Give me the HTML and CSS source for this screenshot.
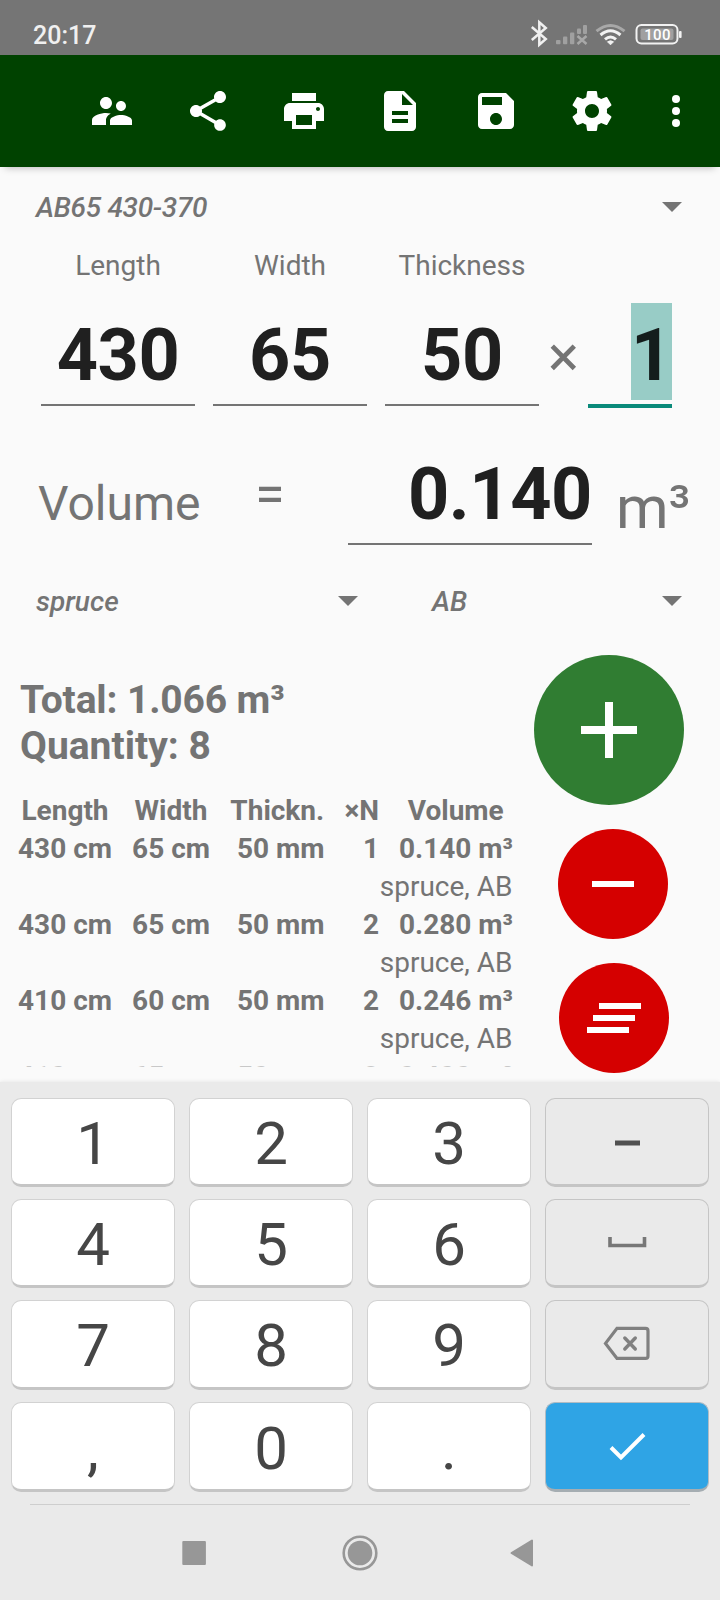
FILE: index.html
```html
<!DOCTYPE html>
<html lang="en">
<head>
<meta charset="utf-8">
<title>Timber calculator</title>
<link rel="stylesheet" href="styles.css">
</head>
<body>
<div class="phone">
  <header class="status">
    <span class="clock">20:17</span>
    <svg class="status-icons" width="156" height="30" viewBox="0 0 156 30">
      <path d="M2.800 8L16.800 20L10.300 25.800V3.200L16.800 9L2.800 21" fill="none" stroke="#f0f0f0" stroke-width="2.500"/>
      <g fill="#a0a0a0">
        <rect x="27" y="21" width="4.500" height="4.300" rx="1"/><rect x="34" y="17.500" width="4.300" height="7.800" rx="1"/><rect x="41" y="13.500" width="4.300" height="11.800" rx="1"/><rect x="48" y="9.500" width="4" height="5.500" rx="1"/><rect x="54" y="6" width="4" height="9" rx="1"/>
      </g>
      <path d="M48.500 17l9 8M57.500 17l-9 8" stroke="#a8a8a8" stroke-width="2.500"/>
      <g fill="none" stroke="#f2f2f2" stroke-width="3">
        <path d="M67.500 12.200Q81.500 .8 95.500 12.200" stroke="#a8a8a8"/>
        <path d="M71.500 16Q81.500 7.500 91.500 16"/><path d="M76 20.400Q81.500 15.500 87 20.400"/>
      </g>
      <path d="M78.500 22.800q3-2 6 0l-3 3z" fill="#f2f2f2" stroke="#f2f2f2"/>
      <rect x="107.500" y="6" width="41" height="18.500" rx="5" fill="none" stroke="#f2f2f2" stroke-width="2"/>
      <rect x="111.500" y="9.500" width="33" height="11.500" rx="2" fill="#a0a0a0"/>
      <rect x="150" y="12" width="2.600" height="7" rx="1" fill="#f2f2f2"/>
      <text class="battery" x="128.500" y="20.500" text-anchor="middle">100</text>
    </svg>
  </header>

  <nav class="toolbar">
    <span class="tool"><svg viewBox="0 0 24 24"><path d="M16.500 12c1.380 0 2.490-1.120 2.490-2.500S17.880 7 16.500 7 14 8.120 14 9.500s1.120 2.500 2.500 2.500zM9 11c1.660 0 2.990-1.340 2.990-3S10.660 5 9 5 6 6.340 6 8s1.340 3 3 3zm7.500 3c-1.830 0-5.500.92-5.500 2.750V19h11v-2.250c0-1.830-3.670-2.750-5.500-2.750zM9 13c-2.330 0-7 1.170-7 3.500V19h7v-2.250c0-.85.33-2.340 2.370-3.470C10.500 13.100 9.660 13 9 13z"/></svg></span>
    <span class="tool"><svg viewBox="0 0 24 24"><path d="M18 16.080c-.76 0-1.440.3-1.960.77L8.910 12.700c.05-.23.09-.46.09-.7s-.04-.47-.09-.7l7.050-4.110c.54.5 1.250.81 2.040.81 1.660 0 3-1.340 3-3s-1.340-3-3-3-3 1.340-3 3c0 .24.040.47.090.7L8.040 9.810C7.500 9.310 6.790 9 6 9c-1.660 0-3 1.340-3 3s1.340 3 3 3c.79 0 1.500-.31 2.040-.81l7.120 4.160c-.05.21-.08.43-.08.65 0 1.610 1.310 2.920 2.920 2.920s2.920-1.310 2.920-2.920-1.310-2.920-2.920-2.920z"/></svg></span>
    <span class="tool"><svg viewBox="0 0 24 24"><path d="M19 8H5c-1.660 0-3 1.340-3 3v6h4v4h12v-4h4v-6c0-1.660-1.340-3-3-3zm-3 11H8v-5h8v5zm3-7c-.55 0-1-.45-1-1s.45-1 1-1 1 .45 1 1-.45 1-1 1zm-1-9H6v4h12V3z"/></svg></span>
    <span class="tool"><svg viewBox="0 0 24 24"><path d="M14 2H6c-1.100 0-1.990.9-1.990 2L4 20c0 1.100.89 2 1.990 2H18c1.100 0 2-.9 2-2V8l-6-6zm2 16H8v-2h8v2zm0-4H8v-2h8v2zm-3-5V3.500L18.500 9H13z"/></svg></span>
    <span class="tool"><svg viewBox="0 0 24 24"><path d="M17 3H5c-1.110 0-2 .9-2 2v14c0 1.100.89 2 2 2h14c1.100 0 2-.9 2-2V7l-4-4zm-5 16c-1.660 0-3-1.340-3-3s1.340-3 3-3 3 1.340 3 3-1.340 3-3 3zm3-10H5V5h10v4z"/></svg></span>
    <span class="tool"><svg viewBox="0 0 24 24"><path d="M19.430 12.980c.04-.32.07-.64.07-.98s-.03-.66-.07-.98l2.110-1.650c.19-.15.24-.42.12-.64l-2-3.460c-.12-.22-.39-.3-.61-.22l-2.490 1c-.52-.4-1.080-.73-1.690-.98l-.38-2.650C14.460 2.180 14.250 2 14 2h-4c-.25 0-.46.18-.49.42l-.38 2.650c-.61.25-1.170.59-1.690.98l-2.490-1c-.23-.09-.49 0-.61.22l-2 3.460c-.13.22-.07.49.12.64l2.110 1.650c-.04.32-.07.65-.07.98s.03.66.07.98l-2.110 1.650c-.19.15-.24.42-.12.64l2 3.460c.12.22.39.3.61.22l2.490-1c.52.4 1.080.73 1.690.98l.38 2.650c.03.24.24.42.49.42h4c.25 0 .46-.18.49-.42l.38-2.650c.61-.25 1.170-.59 1.690-.98l2.490 1c.23.09.49 0 .61-.22l2-3.460c.12-.22.07-.49-.12-.64l-2.110-1.650zM12 15.500c-1.930 0-3.500-1.570-3.500-3.500s1.570-3.500 3.500-3.500 3.500 1.570 3.500 3.500-1.570 3.500-3.500 3.500z"/></svg></span>
    <span class="tool tool-more"><svg viewBox="0 0 24 24"><circle cx="12" cy="6" r="2"/><circle cx="12" cy="12" r="2"/><circle cx="12" cy="18" r="2"/></svg></span>
  </nav>

  <main class="content">
    <div class="spinners spinners-preset">
      <div class="spinner"><span>AB65 430-370</span><i class="caret"></i></div>
    </div>

    <div class="labels"><span>Length</span><span>Width</span><span>Thickness</span></div>
    <div class="dims">
      <div class="field">430</div>
      <div class="field">65</div>
      <div class="field">50</div>
      <div class="times">×</div>
      <div class="field field-active"><span class="selected">1</span></div>
    </div>

    <div class="volume">
      <span class="volume-label">Volume</span>
      <span class="equals">=</span>
      <div class="field field-result">0.140</div>
      <span class="unit">m³</span>
    </div>

    <div class="spinners spinners-type">
      <div class="spinner"><span>spruce</span><i class="caret"></i></div>
      <div class="spinner"><span>AB</span><i class="caret"></i></div>
    </div>

    <div class="lower">
      <section class="results">
        <div class="totals"><div class="total">Total: 1.066 m³</div><div>Quantity: 8</div></div>
        <div class="table">
          <div class="row head"><span>Length</span><span>Width</span><span>Thickn.</span><span>×N</span><span>Volume</span></div>
          <div class="row"><span>430 cm</span><span>65 cm</span><span>50 mm</span><span>1</span><span>0.140 m³</span></div>
          <div class="note">spruce, AB</div>
          <div class="row"><span>430 cm</span><span>65 cm</span><span>50 mm</span><span>2</span><span>0.280 m³</span></div>
          <div class="note">spruce, AB</div>
          <div class="row"><span>410 cm</span><span>60 cm</span><span>50 mm</span><span>2</span><span>0.246 m³</span></div>
          <div class="note">spruce, AB</div>
          <div class="row"><span>410 cm</span><span>65 cm</span><span>50 mm</span><span>3</span><span>0.400 m³</span></div>
        </div>
      </section>
      <div class="actions">
        <svg class="fab fab-add" viewBox="0 0 150 150"><path d="M71 47h8v24h24v8H79v24h-8V79H47v-8h24z"/></svg>
        <svg class="fab fab-remove" viewBox="0 0 110 110"><path d="M34 52h42v6H34z"/></svg>
        <svg class="fab fab-clear" viewBox="0 0 110 110"><path d="M40 40h42v6H40zM34 52h42v6H34zM28 64h42v6H28z"/></svg>
      </div>
    </div>
  </main>

  <section class="keyboard">
    <div class="keys">
      <div class="key">1</div><div class="key">2</div><div class="key">3</div>
      <div class="key key-fn"><svg width="48" height="48" viewBox="0 0 48 48"><path d="M12 23.500h25v5H12z" fill="#505050"/></svg></div>
      <div class="key">4</div><div class="key">5</div><div class="key">6</div>
      <div class="key key-fn"><svg width="48" height="48" viewBox="0 0 48 48"><path d="M7 19v8.500h34.500V19" fill="none" stroke="#777" stroke-width="3.600"/></svg></div>
      <div class="key">7</div><div class="key">8</div><div class="key">9</div>
      <div class="key key-fn"><svg width="48" height="48" viewBox="0 0 48 48"><path d="M14 9h28.500q2.500 0 2.500 2.500v25q0 2.500-2.500 2.500H14L2.500 24z" transform="translate(0 .4)" fill="none" stroke="#808080" stroke-width="3.200"/><path d="M21.800 19l10.500 11M32.300 19l-10.500 11" stroke="#808080" stroke-width="3.400" stroke-linecap="round"/></svg></div>
      <div class="key key-last">,</div><div class="key key-last">0</div><div class="key key-last">.</div>
      <div class="key key-enter"><svg width="48" height="48" viewBox="0 0 48 48"><path d="M8 26.500l10 10L41 13.500" fill="none" stroke="#fff" stroke-width="4"/></svg></div>
    </div>
    <div class="navbar">
      <svg width="24" height="24" viewBox="0 0 24 24"><rect x=".3" width="23.600" height="24" rx="1"/></svg>
      <svg class="nav-home" width="36" height="36" viewBox="0 0 36 36"><circle cx="18" cy="18" r="16.300" fill="none" stroke="#979797" stroke-width="2.600"/><circle cx="18" cy="18" r="12.300"/></svg>
      <svg width="24" height="28" viewBox="0 0 24 28"><path d="M22 1.500v25L1.500 14z" stroke="#979797" stroke-width="2" stroke-linejoin="round"/></svg>
    </div>
  </section>
</div>
</body>
</html>
```

FILE: styles.css
```css
* { box-sizing: border-box; }
body {
  margin: 0;
  background: #fafafa;
  font-family: Roboto, "Liberation Sans", sans-serif;
  color: #747474;
}
svg { display: block; flex: none; }
.phone { width: 720px; height: 1600px; display: flex; flex-direction: column; overflow: hidden; }

.status {
  flex: none;
  height: 55px;
  padding: 15px 30px 0 33px;
  display: flex;
  justify-content: space-between;
  background: #757575;
}
.clock { font-size: 25px; font-weight: 500; line-height: 41px; color: #f0f0f0; }
.status-icons { margin: 4px 5px 0 0; }
.battery { font-size: 15px; font-weight: 500; letter-spacing: .3px; fill: #fff; }

.toolbar {
  flex: none;
  height: 112px;
  padding: 0 8px 0 64px;
  display: flex;
  align-items: center;
  background: #004200;
  box-shadow: 0 6px 7px -5px rgba(0, 0, 0, .25);
}
.tool { width: 96px; display: flex; justify-content: center; }
.tool-more { width: 72px; }
.tool svg { width: 48px; height: 48px; fill: #fff; }

.content { flex: none; height: 915px; display: flex; flex-direction: column; }
.content > * { flex: none; }
.spinners { display: flex; height: 60px; padding-right: 38px; }
.spinners-preset { margin-top: 10px; padding-left: 36px; letter-spacing: -.3px; }
.spinners-type { margin-top: 26px; padding-left: 36px; gap: 74px; }
.spinner {
  flex: 1;
  display: flex;
  align-items: center;
  justify-content: space-between;
  font-size: 28px;
  font-style: italic;
  font-weight: 500;
}
.spinners-type .spinner:first-child { flex: none; width: 322px; }
.caret { border: 10px solid transparent; border-top-color: #747474; border-bottom: 0; }

.labels {
  margin: 12px 0 0 41px;
  display: grid;
  grid-template-columns: repeat(3, 154px);
  gap: 18px;
  font-size: 28px;
  line-height: 33px;
  text-align: center;
}
.dims {
  margin: 21px 48px 0 41px;
  height: 105px;
  display: flex;
  align-items: flex-start;
  gap: 18px;
}
.field {
  width: 154px;
  height: 103px;
  border-bottom: 2px solid #747474;
  display: flex;
  justify-content: center;
  font-size: 72px;
  font-weight: 700;
  letter-spacing: -.4px;
  line-height: 105px;
  color: #202020;
}
.times { width: 49px; margin: 0 -18px; font-size: 58px; line-height: 107px; text-align: center; }
.field-active { width: 84px; height: 105px; border-bottom: 4px solid #0a8a7a; justify-content: flex-end; }
.selected { width: 41px; height: 97px; background: #98ccc6; color: #141d1c; }

.volume {
  margin: 34px 28px 0 38px;
  height: 103px;
  display: flex;
}
.volume-label { width: 217px; padding-top: 34px; font-size: 48px; line-height: 56px; }
.equals { width: 93px; padding-top: 25px; font-size: 54px; line-height: 56px; }
.field-result { width: 244px; justify-content: flex-end; }
.unit { padding: 31px 0 0 24px; font-size: 60px; line-height: 70px; white-space: nowrap; }

.lower { height: 450px; padding: 0 36px 0 18px; display: flex; justify-content: space-between; }
.results { height: 436px; overflow: hidden; padding-top: 46px; }
.totals { margin: 0 0 23px 2px; font-size: 39px; font-weight: 700; line-height: 46px; }
.total { letter-spacing: -.15px; }
.row { display: grid; grid-template-columns: 94px 78px 94.500px 34.500px 113.500px; gap: 20px; }
.row, .note { width: 494.500px; height: 38px; font-size: 28px; line-height: 38px; text-align: right; white-space: nowrap; }
.row { font-weight: 700; }
.head { text-align: center; }
.row:last-child { color: #c8c8c8; }
.actions { width: 150px; padding-top: 24px; display: flex; flex-direction: column; align-items: center; gap: 24px; }
.fab { border-radius: 50%; fill: #fff; }
.fab-add { width: 150px; height: 150px; background: #307d32; }
.fab-remove { width: 110px; height: 110px; margin-left: 8px; background: #d50000; }
.fab-clear { width: 110px; height: 110px; margin-left: 10px; background: #d50000; }

.keyboard {
  flex: 1;
  min-height: 0;
  padding: 16px 11px 0;
  background: #eaeaea;
  box-shadow: 0 0 4px rgba(0, 0, 0, .1);
}
.keys {
  display: grid;
  grid-template-columns: repeat(4, 164px);
  grid-template-rows: 89px 89px 90px 90px;
  gap: 12px 14px;
}
.key {
  border: 1px solid #d2d2d2;
  border-bottom: 3px solid #c5c5c5;
  border-radius: 10px;
  background: #fff;
  display: flex;
  align-items: center;
  justify-content: center;
  font-size: 60px;
  line-height: 70px;
  padding-top: 4px;
  color: #464646;
}
.key-last { padding-top: 5px; }
.key-fn, .key-enter { padding: 0 0 2px; }
.key-fn { background: #eaeaea; border-color: #c5c5c5; }
.key-enter { background: #2fa4e5; border-color: #b0bcc4 #b0bcc4 #a5adb2; }
.navbar {
  margin: 12px 19px 0;
  height: 96px;
  border-top: 1px solid #cecece;
  display: flex;
  align-items: center;
  padding: 0 156px 0 152px;
  justify-content: space-between;
}
.navbar svg { fill: #979797; }
.nav-home { margin-left: 4px; }
```
